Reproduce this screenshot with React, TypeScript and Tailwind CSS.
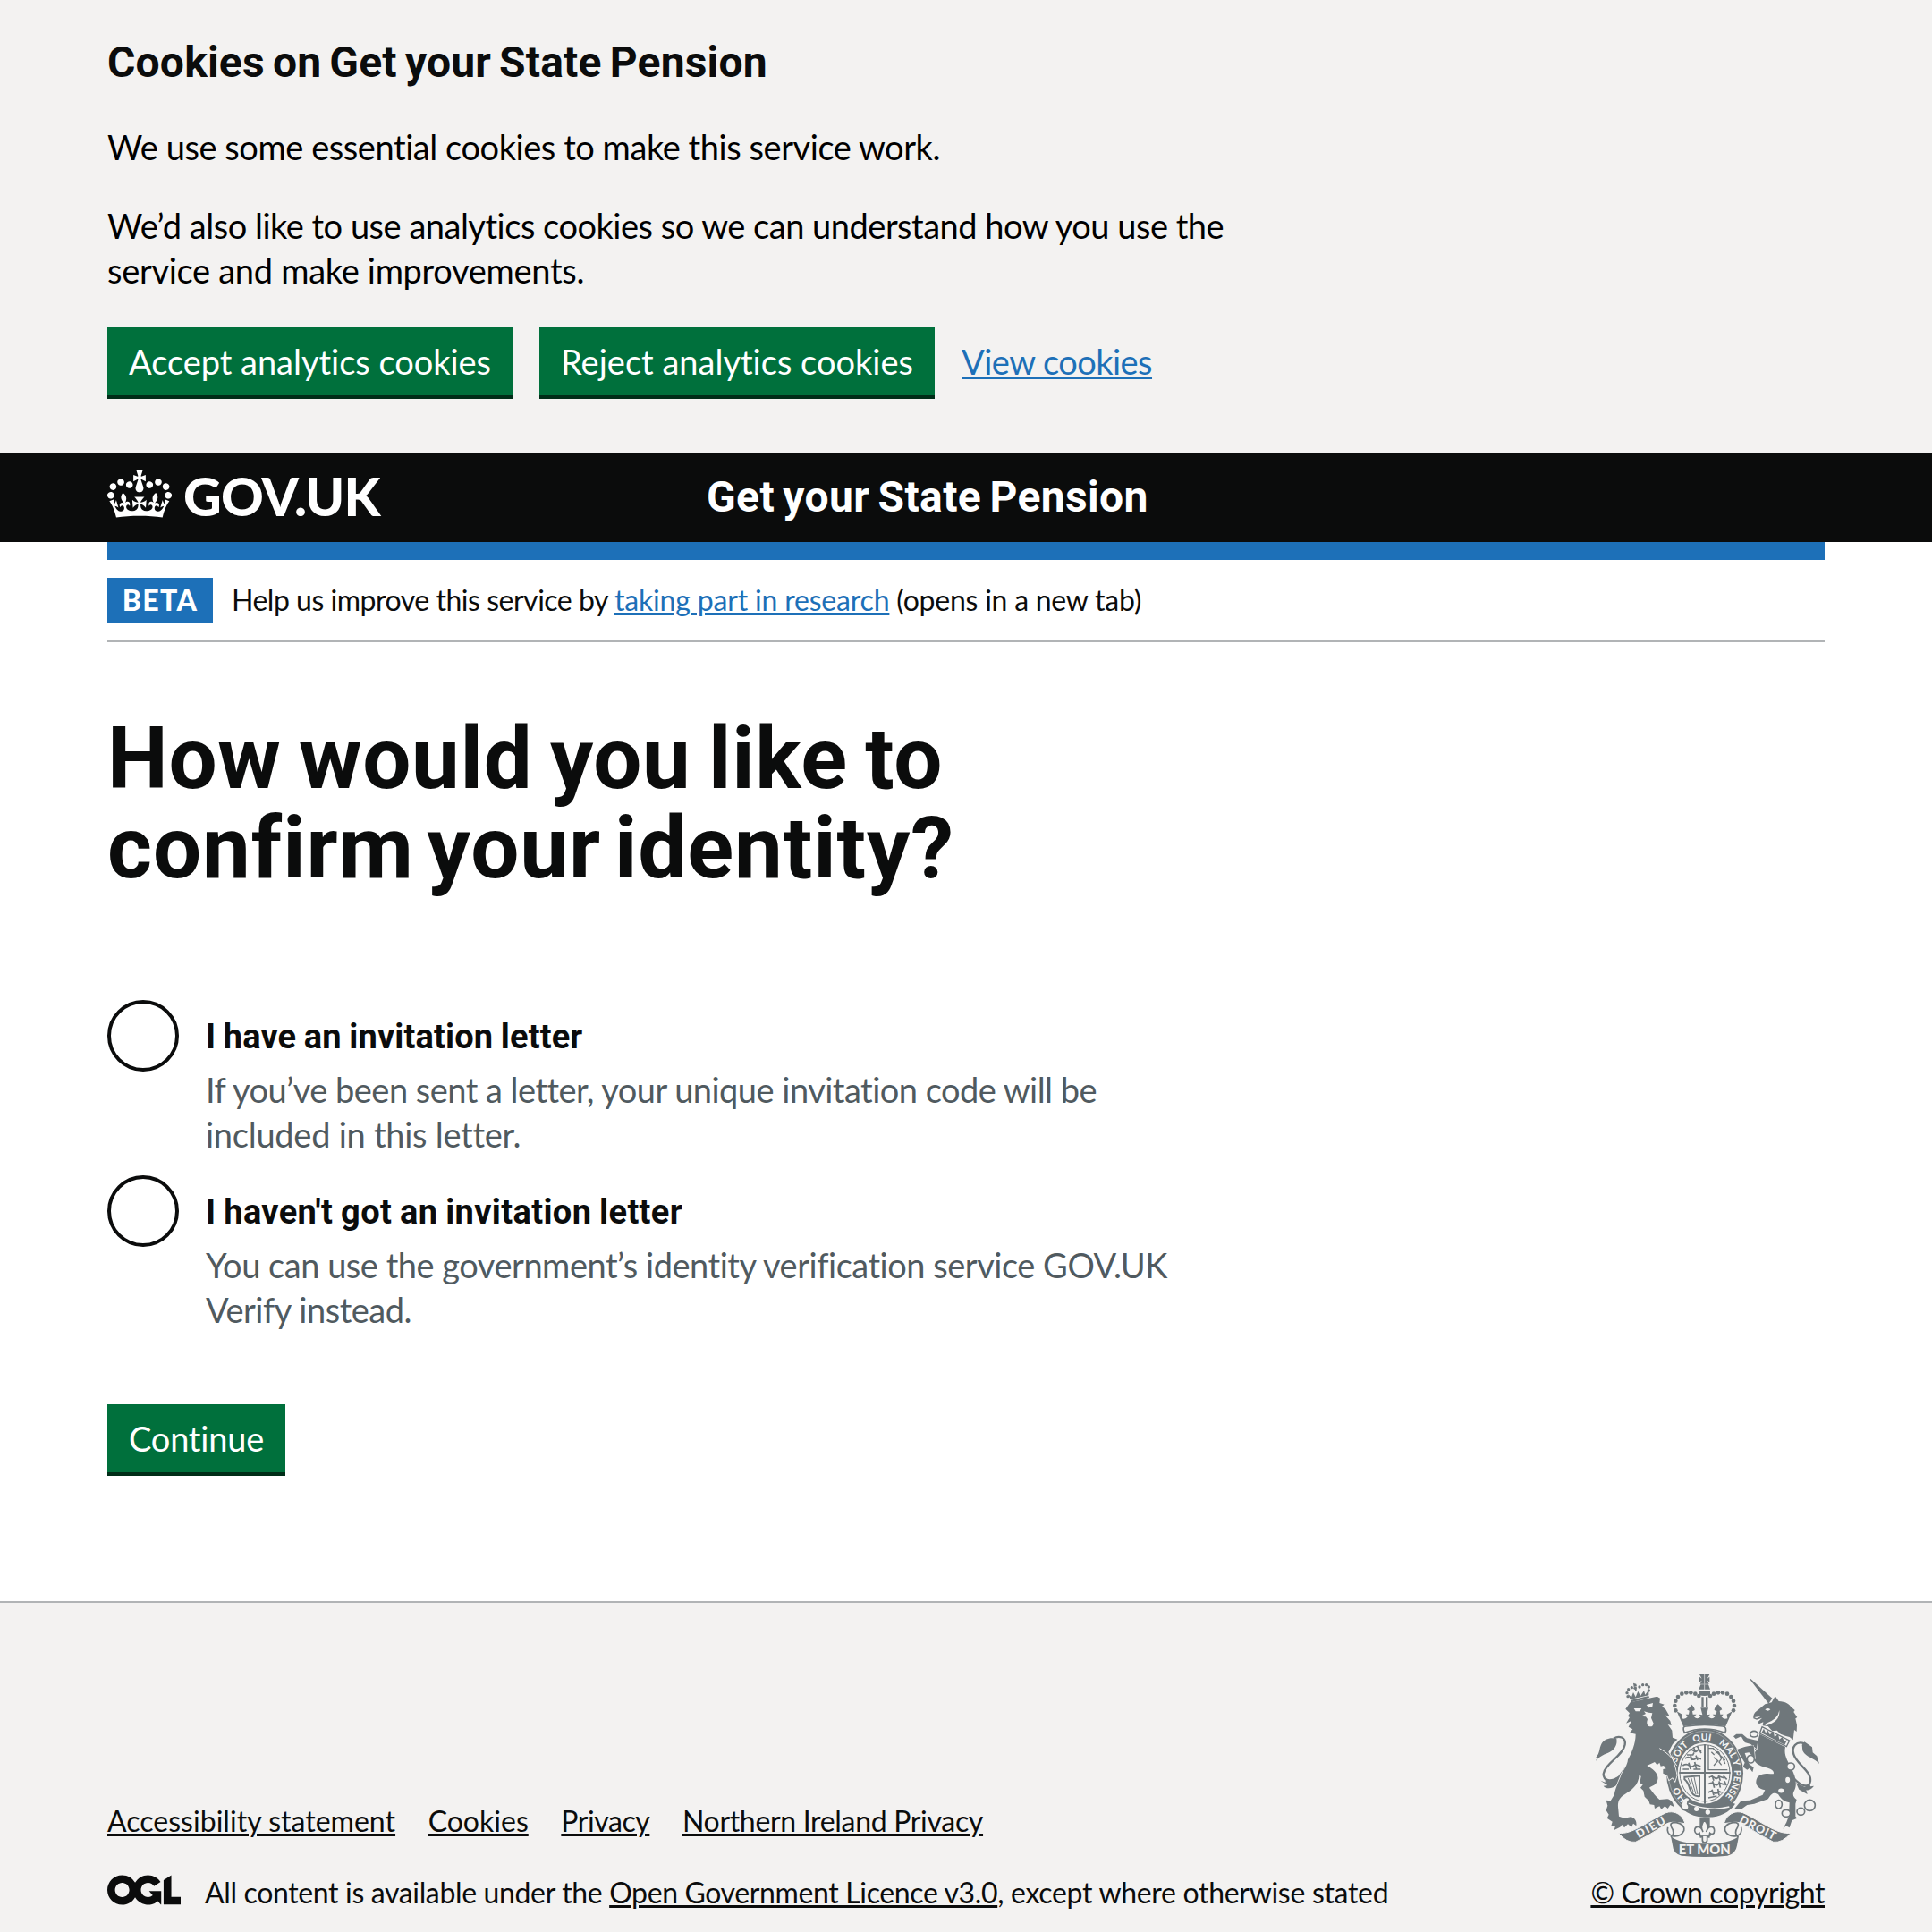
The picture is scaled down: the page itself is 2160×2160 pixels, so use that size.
import React from "react";

const ArcText = ({ at, children }: { at: string; children: string }) => (
  <text textAnchor="middle" fontSize="31">
    <textPath href="#garter" startOffset={at}>{children}</textPath>
  </text>
);

function Crown() {
  return (
    <svg className="mb-[7px] h-[53px] w-[72px]" viewBox="0 0 132 97" fill="currentColor" fillRule="evenodd">
      <path d="M25 30.2c3.5 1.5 7.7-.2 9.1-3.7 1.5-3.6-.2-7.8-3.9-9.2-3.6-1.4-7.6.3-9.1 3.9-1.4 3.5.3 7.5 3.9 9zM9 39.5c3.6 1.5 7.8-.2 9.2-3.7 1.5-3.6-.2-7.8-3.9-9.1-3.6-1.5-7.6.2-9.1 3.8-1.4 3.5.3 7.5 3.8 9zM4.4 57.2c3.5 1.5 7.7-.2 9.1-3.8 1.5-3.6-.2-7.7-3.9-9.1-3.5-1.5-7.6.3-9.1 3.8-1.4 3.5.3 7.6 3.9 9.1zm38.3-21.4c3.5 1.5 7.7-.2 9.1-3.8 1.5-3.6-.2-7.7-3.9-9.1-3.6-1.5-7.6.3-9.1 3.8-1.3 3.6.4 7.7 3.9 9.1zm64.4-5.6c-3.6 1.5-7.8-.2-9.1-3.7-1.5-3.6.2-7.8 3.8-9.2 3.6-1.4 7.7.3 9.2 3.9 1.3 3.5-.4 7.5-3.9 9zm15.9 9.3c-3.6 1.5-7.7-.2-9.1-3.7-1.5-3.6.2-7.8 3.7-9.1 3.6-1.5 7.7.2 9.2 3.8 1.5 3.5-.3 7.5-3.8 9zm4.7 17.7c-3.6 1.5-7.8-.2-9.2-3.8-1.5-3.6.2-7.7 3.9-9.1 3.6-1.5 7.7.3 9.2 3.8 1.3 3.5-.4 7.6-3.9 9.1zM89.3 35.8c-3.6 1.5-7.8-.2-9.2-3.8-1.4-3.6.2-7.7 3.9-9.1 3.6-1.5 7.7.3 9.2 3.8 1.4 3.6-.3 7.7-3.9 9.1zM69.7 17.7l8.9 4.7V9.3l-8.9 2.8c-.2-.3-.5-.6-.9-.9L72.4 0H59.6l3.5 11.2c-.3.3-.6.5-.9.9l-8.8-2.8v13.1l8.8-4.7c.3.3.6.7.9.9l-5 15.4v.1c-.2.8-.4 1.6-.4 2.4 0 4.1 3.1 7.5 7 8.1h.2c.3 0 .7.1 1 .1.4 0 .7 0 1-.1h.2c4-.6 7.1-4.1 7.1-8.1 0-.8-.1-1.7-.4-2.4V34l-5.1-15.4c.4-.2.7-.6 1-.9zM66 92.8c16.9 0 32.8 1.1 47.1 3.2 4-16.9 8.9-26.7 14-33.5l-9.6-3.4c1 4.9 1.1 7.2 0 10.2-1.5-1.4-3-4.3-4.2-8.7L108.6 76c2.8-2 5-3.2 7.5-3.3-4.4 9.4-10 11.9-13.6 11.2-4.3-.8-6.3-4.6-5.6-7.9 1-4.7 5.7-5.9 8-.5 4.3-8.7-3-11.4-7.6-8.8 7.1-7.2 7.9-13.5 2.1-21.1-8 6.1-8.1 12.3-4.5 20.8-4.7-5.4-12.1-2.5-9.5 6.2 3.4-5.2 7.9-2 7.2 3.1-.6 4.3-6.4 7.8-13.5 7.2-10.3-.9-10.9-8-11.2-13.8 2.5-.5 7.1 1.8 11 7.3L80.2 60c-4.1 4.4-8 5.3-12.3 5.4 1.4-4.4 8-11.6 8-11.6H55.5s6.4 7.2 7.9 11.6c-4.2-.1-8-1-12.3-5.4l1.4 16.4c3.9-5.5 8.5-7.7 10.9-7.3-.3 5.8-.9 12.8-11.1 13.8-7.2.6-12.9-2.9-13.5-7.2-.7-5 3.8-8.3 7.1-3.1 2.7-8.7-4.6-11.6-9.4-6.2 3.7-8.5 3.6-14.7-4.6-20.8-5.8 7.6-5 13.9 2.2 21.1-4.7-2.6-11.9.1-7.7 8.8 2.3-5.5 7.1-4.2 8.1.5.7 3.3-1.3 7.1-5.7 7.9-3.5.7-9-1.8-13.5-11.2 2.5.1 4.7 1.3 7.5 3.3l-4.7-15.4c-1.2 4.4-2.7 7.2-4.3 8.7-1.1-3-.9-5.3 0-10.2l-9.5 3.4c5 6.9 9.9 16.7 14 33.5 14.8-2.1 30.8-3.2 47.7-3.2z" />
    </svg>
  );
}

function OglLogo() {
  return (
    <svg className="mr-[27px] h-[34px] w-[82px]" viewBox="0 0 483.2 195.7" fill="currentColor">
      <path d="M421.5 142.8V.1l-50.7 32.3v161.1h112.4v-50.7zm-122.3-9.6A47.12 47.12 0 0 1 221 97.8c0-26 21.1-47.1 47.1-47.1 16.7 0 31.4 8.7 39.7 21.8l42.7-27.2A97.63 97.63 0 0 0 268.1 0c-36.5 0-68.3 20.1-85.1 49.7A98 98 0 0 0 97.8 0C43.9 0 0 43.9 0 97.8s43.9 97.8 97.8 97.8c36.5 0 68.3-20.1 85.1-49.7a97.76 97.76 0 0 0 149.6 25.4l19.4 22.2h3v-87.8h-80l24.3 27.5zM97.8 145c-26 0-47.1-21.1-47.1-47.1s21.1-47.1 47.1-47.1 47.1 21.1 47.1 47.1S123.8 145 97.8 145" />
    </svg>
  );
}

const archDots = [[340, 187], [337, 171], [340, 155], [348, 141], [361, 131], [376, 127], [391, 127], [406, 131], [418, 138]];

function RoyalArms() {
  const light = "#f3f2f1";
  return (
    <svg className="h-[204px] w-[250px] text-[#6f777b]" viewBox="72 66 750 612" fill="currentColor" fontFamily="Lato, sans-serif" fontWeight="900">
      <defs>
        <path id="garter" d="M438 505 A98 108 0 0 1 438 287 A98 108 0 0 1 438 505" />
      </defs>

      {/* Garter */}
      <ellipse cx="438" cy="397" rx="129" ry="148" />
      <ellipse cx="438" cy="397" rx="122" ry="141" fill="none" stroke={light} strokeWidth="2" opacity=".5" />
      <ellipse cx="438" cy="397" rx="91" ry="103" fill={light} />
      <g fill={light}>
        <ArcText at="14%">HO</ArcText>
        <ArcText at="35.6%">SOIT</ArcText>
        <ArcText at="48.6%">QUI</ArcText>
        <ArcText at="64.5%">MAL Y</ArcText>
        <ArcText at="81%">PENSE</ArcText>
      </g>

      {/* Shield */}
      <ellipse cx="438" cy="397" rx="84" ry="95" fill="none" stroke="currentColor" strokeWidth="3" />
      <path d="M438 300V500M352 396H524" stroke="currentColor" strokeWidth="6" fill="none" />
      <g fill="none" stroke="currentColor" strokeWidth="5">
        <path d="M384 322q8 -8 16 0t16 -4l10 6M400 310l6 14M378 336h20l4 -8M412 306l14 24M372 348q10 -8 20 0t18 -3l16 5M390 338l6 16M408 338l6 16M364 372q12 -8 22 0t20 -4l18 6M384 362l6 22M404 360l6 24M364 384h20M400 384h24" />
        <path d="M452 412q10 -8 18 0t16 -4l18 6M462 404l6 18M484 404l6 18M450 434q10 -8 20 0t16 -4l20 6M464 424l6 22M486 424l4 22M450 462q10 -8 18 0t18 -4l8 4M462 452l6 20M482 450l4 22M450 480l28 -6M500 406l12 12M504 424l6 14" />
        <path d="M450 304V386H514M452 314h14l40 40M474 332q10 -14 14 2t10 8l-12 18l8 10M468 344l14 12l-14 16M460 326l10 10M500 350l6 16" strokeWidth="4" />
        <path d="M370 410L420 406L420 474Q398 478 388 450Q382 428 370 418Z" strokeWidth="6" />
        <path d="M382 414L400 462M392 412L408 468M402 410L414 468" strokeWidth="3" />
      </g>

      {/* Belt and strap */}
      <path d="M376 486 C410 506 470 512 496 508 L516 492 L540 500 C510 546 440 560 384 526Z" />
      <path d="M370 492 C410 514 470 524 520 510" fill="none" stroke={light} strokeWidth="4" />
      <path d="M366 484q14 -12 22 2q-8 6 -8 14q8 10 2 18q-14 8 -22 -4" fill={light} stroke="currentColor" strokeWidth="5" />
      <g fill={light}><circle cx="410" cy="517" r="8" /><circle cx="448" cy="528" r="8" /></g>
      <path d="M421 549H455V580H421Z" />
      <path d="M437 554C424 570 426 584 432 594C424 570 404 574 404 590C406 602 414 604 420 598L424 612L430 610V622A8 8 0 0 0 446 622V610L452 612L455 598C462 604 470 602 470 590C470 574 450 570 443 594C450 584 450 570 437 554Z" fill={light} stroke="currentColor" strokeWidth="5" />
      <path d="M418 606H458" stroke="currentColor" strokeWidth="5" />

      {/* Crown */}
      <path d="M420 66H454L446 80L454 74V92L446 86L452 98H422L428 86L420 92V74L428 80Z" />
      <path d="M424 100H450L456 116H418Z M418 121H456V134Q437 142 418 134Z M427 142H434V174H427Z M441 142H448V174H441Z" />
      <path d="M437 66V98M437 100V118" stroke={light} strokeWidth="2" />
      {archDots.map(([x, y]) => (
        <g key={x + y * 1000}><circle cx={x} cy={y} r="7" /><circle cx={874 - x} cy={y} r="7" /></g>
      ))}
      <path d="M344 190L362 200L360 214Q374 218 380 208L374 200L384 200L386 188L378 184Q392 176 392 166Q404 176 404 186L396 190L398 200L410 200L402 208Q412 220 424 208L418 200L430 202L424 178H450L444 202L456 200L450 208Q462 220 472 208L464 200L476 200L478 190L470 186Q470 176 482 166Q494 176 496 184L488 188L490 200L500 200L494 208Q500 218 514 214L512 200L530 190L508 240Q437 228 366 240Z" />
      <path d="M370 262Q360 240 376 240Q437 230 498 240Q514 242 506 262Q437 236 370 262Z" fill={light} stroke="currentColor" strokeWidth="5" />

      {/* Lion */}
      <path d="M132 281C150 270 174 276 170 302C164 338 102 366 98 400C98 424 122 428 150 410L176 374" fill="none" stroke="currentColor" strokeWidth="7" />
      <path d="M72 357L78 343L72 345C88 330 82 316 92 298C100 282 124 276 142 282C146 302 134 322 112 330C96 336 84 342 72 357ZM88 422L104 428L104 412L120 424L160 402L144 436C128 450 108 452 98 440L112 438Z" />
      <path d="M172 182L188 160L278 140L288 146L286 162L302 167L294 174L306 182L319 205L305 203L322 222L326 237L314 234L328 254L330 278L346 284L330 300L316 326C328 345 338 370 344 405L338 424L330 412L318 420L312 404L298 398L298 384L308 382L300 372L290 374L286 362L278 370L270 360L244 372C264 382 284 400 280 418C278 436 262 440 252 446C262 460 274 476 286 486L312 484C324 486 332 494 334 510L322 504L314 516L304 508L292 518L286 508L270 516L268 504L254 502L250 490L236 476L232 456L222 446L230 436L220 430L224 408L218 402C216 440 190 455 170 468C150 480 144 494 148 520L150 542L168 548L190 544C206 548 210 560 208 574L198 566L192 578L180 568L168 580L160 570L154 578L134 588L138 574L124 574L128 560L110 548L116 536L107 522L112 506L107 488L122 490L134 470C140 440 152 420 158 402C166 385 178 372 180 352C192 330 206 300 206 266L186 262L196 250L182 242L192 222L174 230L186 210L180 206L186 196Z" stroke={light} strokeWidth="5" paintOrder="stroke" />
      <path d="M286 314Q324 334 344 372" stroke={light} strokeWidth="3" fill="none" />
      <g fill={light}>
        <path d="M200 180L226 180L220 190H206ZM242 168L264 162L262 174L250 178ZM224 206L240 198L234 190L250 194L262 196L258 212L266 230Q264 244 250 240Q240 234 246 216L240 208Z" />
      </g>
      <path d="M190 152L250 138L252 144L192 160Z" />
      <path d="M188 150L180 132L192 142L198 126L206 142L214 122L222 138L234 120L238 134L250 118L250 136Z" />
      <g>{[[180, 140], [177, 128], [182, 116], [193, 110], [204, 112], [219, 108], [230, 101], [242, 101], [250, 108], [250, 120]].map(([x, y]) => <circle key={x * y} cx={x} cy={y} r="5" />)}</g>
      <path d="M198 95L208 98L210 106L200 108ZM204 108h5v14h-5z" />

      {/* Unicorn */}
      <path d="M588 81L592 81L664 146L652 164Z" />
      <path d="M601 214C600 200 606 192 616 186L640 166L662 160L674 139L686 156C708 156 724 168 726 174L740 186L736 192L748 210L742 214L747 236L746 258L738 252L734 286L722 276L708 272L692 266L680 254L664 256L650 240L632 238L634 226L620 232L616 226L630 212L612 218Z" />
      <path d="M640 184Q650 176 658 184Q650 192 640 184ZM688 186Q692 226 640 238L644 230Q684 216 688 186ZM604 210L626 206L612 214Z" fill={light} />
      <path d="M622 266L708 310C702 336 716 356 728 380C744 410 748 436 738 456C730 470 736 478 746 486L742 500L742 542L748 548L730 556L722 580L710 574L700 584L712 562L720 540L722 496C706 492 694 486 684 468C672 462 664 460 650 484L604 500L580 504L560 518L536 518L560 490L590 488L632 470L640 454C612 448 604 430 614 412C624 396 650 398 668 400C672 392 664 384 650 380C630 376 606 368 602 348C600 338 604 328 610 322L600 310L616 290Z" />
      <path d="M630 242L722 288L712 308L622 264Z" fill={light} stroke="currentColor" strokeWidth="4" />
      <path d="M628 262L636 248L642 262L650 254L656 268L668 258L672 276L684 266L688 284L698 276L704 290L714 286L706 302Z" />
      <path d="M612 316L592 300L572 294L560 274L542 282L534 274L544 266L564 266L580 280L604 286L616 288ZM602 304C580 306 562 312 546 318L558 340L572 362L566 376L580 386L588 380L598 394L602 378L586 366L572 330L586 328L606 346Z" stroke={light} strokeWidth="4" paintOrder="stroke" />
      <path d="M772 298C744 288 728 310 736 334C744 366 796 390 792 424C788 448 764 444 736 414" fill="none" stroke="currentColor" strokeWidth="7" />
      <path d="M764 302L772 292L798 310L800 328L814 340L822 366C806 346 778 346 766 322ZM744 430L774 444L790 430L792 442L804 440Q792 456 778 454L782 468L754 452Z" />
      <g fill={light} stroke="currentColor" strokeWidth="5">
        <ellipse cx="603" cy="266" rx="13" ry="10" /><ellipse cx="592" cy="350" rx="12" ry="13" />
        <ellipse cx="726" cy="375" rx="13" ry="12" /><ellipse cx="716" cy="420" rx="10" ry="12" />
        <ellipse cx="694" cy="456" rx="12" ry="10" /><ellipse cx="686" cy="502" rx="11" ry="14" />
        <ellipse cx="711" cy="532" rx="14" ry="12" /><ellipse cx="760" cy="526" rx="13" ry="12" /><circle cx="790" cy="505" r="18" />
      </g>

      {/* Motto ribbon */}
      <path d="M148 598C196 604 250 556 308 530C332 522 354 532 366 552L372 566L340 562Q316 560 302 572Q250 606 206 628Q176 632 148 598Z" stroke={light} strokeWidth="3" />
      <path d="M727 598C678 604 624 556 566 530C542 522 520 532 508 552L502 566L534 562Q558 560 572 572Q624 606 668 628Q698 632 727 598Z" stroke={light} strokeWidth="3" />
      <path d="M340 562Q372 568 368 590Q358 612 330 608Q308 600 314 578M340 562Q318 562 326 578Q340 598 324 612" fill={light} stroke="currentColor" strokeWidth="5" />
      <path d="M534 562Q502 568 506 590Q516 612 544 608Q566 600 560 578M534 562Q556 562 548 578Q534 598 550 612" fill={light} stroke="currentColor" strokeWidth="5" />
      <path d="M324 608Q350 634 437 634Q524 634 552 608L546 640Q542 668 514 674Q437 682 360 674Q332 668 330 640Z" />
      <g fill={light}>
        <text transform="translate(216 616) rotate(-29)" fontSize="38" textLength="106">DIEU</text>
        <text transform="translate(551 562) rotate(27)" fontSize="38" textLength="132">DROIT</text>
        <text x="350" y="668" fontSize="46" textLength="174" lengthAdjust="spacingAndGlyphs">ET MON</text>
      </g>
    </svg>
  );
}

const link = "underline decoration-[3px] underline-offset-[2px]";
const button = "flex h-[76px] items-center bg-[#00703c] px-6 whitespace-nowrap text-white shadow-[0_4px_0_#002d18]";

export default function App() {
  return (
    <div className="flex h-[2160px] w-[2160px] flex-col overflow-hidden bg-white font-['Lato',sans-serif] text-[38px] leading-[50px] text-[#0b0c0c]">
      <section className="h-[506px] shrink-0 bg-[#f3f2f1] px-[120px] pt-10 text-black">
        <h2 className="mb-[39px] font-['Roboto',sans-serif] text-[48px] leading-[60px] font-bold text-[#0b0c0c]"><span className="tracking-[0.18px] [word-spacing:-3px]">Cookies on Get your State Pension</span></h2>
        <p className="mb-[38px]"><span className="tracking-[-0.44px]">We use some essential cookies to make this service work.</span></p>
        <p className="mb-[39px]">
          <span className="tracking-[-0.49px]">We’d also like to use analytics cookies so we can understand how you use the</span><br />
          <span className="tracking-[-0.3px]">service and make improvements.</span>
        </p>
        <div className="flex h-[76px] items-center gap-[30px]">
          <button className={button}><span className="tracking-[-0.03px]">Accept analytics cookies</span></button>
          <button className={button}><span className="tracking-[0.01px]">Reject analytics cookies</span></button>
          <a className={`${link} text-[#1d70b8]`}><span className="tracking-[-0.53px]">View cookies</span></a>
        </div>
      </section>

      <header className="h-[100px] shrink-0 bg-[#0b0c0c] px-[120px] text-white">
        <div className="flex h-full items-center">
          <div className="flex w-[670px] items-center gap-[13px]">
            <Crown />
            <span className="mb-[2px] text-[59px] leading-[60px] font-black tracking-[-0.8px]">GOV.UK</span>
          </div>
          <span className="font-['Roboto',sans-serif] text-[48px] font-bold tracking-[0.38px] [word-spacing:-3px]">Get your State Pension</span>
        </div>
      </header>

      <div className="mx-[120px] shrink-0 border-t-[20px] border-[#1d70b8]">
        <div className="flex h-[92px] items-center border-b-2 border-[#b1b4b6] text-[32px] leading-10">
          <strong className="mr-[21px] flex h-[50px] w-[118px] items-center justify-center bg-[#1d70b8] text-white"><span className="font-black tracking-[1.3px]">BETA</span></strong>
          <p className="whitespace-pre">
            <span className="tracking-[-0.48px]">Help us improve this service by </span>
            <a className={`${link} text-[#1d70b8]`}><span className="tracking-[-0.18px]">taking part in research</span></a>
            <span className="tracking-[-0.24px]"> (opens in a new tab)</span>
          </p>
        </div>
      </div>

      <main className="mx-[120px] h-[1072px] shrink-0 pt-20">
        <h1 className="mb-[120px] font-['Roboto',sans-serif] text-[96px] leading-[100px] font-bold">
          <span className="tracking-[0.68px] [word-spacing:-5px]">How would you like to</span><br />
          <span className="tracking-[0.95px] [word-spacing:-10px]">confirm your identity?</span>
        </h1>
        <div className="mb-5 flex gap-[30px]">
          <span className="h-20 w-20 rounded-full border-4 border-[#0b0c0c]" />
          <div className="pt-4">
            <div className="mb-[9px] font-['Roboto',sans-serif] font-bold"><span className="tracking-[0.14px] [word-spacing:-1px]">I have an invitation letter</span></div>
            <div className="mb-px text-[#505a5f]">
              <span className="tracking-[-0.52px]">If you’ve been sent a letter, your unique invitation code will be</span><br />
              <span className="tracking-[-0.26px]">included in this letter.</span>
            </div>
          </div>
        </div>
        <div className="mb-20 flex gap-[30px]">
          <span className="h-20 w-20 rounded-full border-4 border-[#0b0c0c]" />
          <div className="pt-4">
            <div className="mb-[9px] font-['Roboto',sans-serif] font-bold"><span className="tracking-[0.36px] [word-spacing:-1px]">I haven't got an invitation letter</span></div>
            <div className="mb-px text-[#505a5f]">
              <span className="tracking-[-0.48px]">You can use the government’s identity verification service GOV.UK</span><br />
              <span className="tracking-[-0.47px]">Verify instead.</span>
            </div>
          </div>
        </div>
        <button className={button}><span className="tracking-[-0.21px]">Continue</span></button>
      </main>

      <footer className="flex grow items-end justify-between border-t-2 border-[#b1b4b6] bg-[#f3f2f1] px-[120px] pb-6 text-[32px] leading-10">
        <div>
          <nav className="mb-10 flex gap-[36.6px]">
            <a className={link}><span className="tracking-[0.03px]">Accessibility statement</span></a>
            <a className={link}><span className="tracking-[0.01px]">Cookies</span></a>
            <a className={link}><span className="tracking-[-0.44px]">Privacy</span></a>
            <a className={link}><span className="tracking-[-0.32px]">Northern Ireland Privacy</span></a>
          </nav>
          <div className="flex">
            <OglLogo />
            <p className="whitespace-pre">
              <span className="tracking-[-0.35px]">All content is available under the </span>
              <a className={link}><span className="tracking-[-0.37px]">Open Government Licence v3.0</span></a>
              <span className="tracking-[-0.31px]">, except where otherwise stated</span>
            </p>
          </div>
        </div>
        <div className="flex flex-col items-center gap-5">
          <RoyalArms />
          <a className={link}><span className="tracking-[-0.4px]">© Crown copyright</span></a>
        </div>
      </footer>
    </div>
  );
}
